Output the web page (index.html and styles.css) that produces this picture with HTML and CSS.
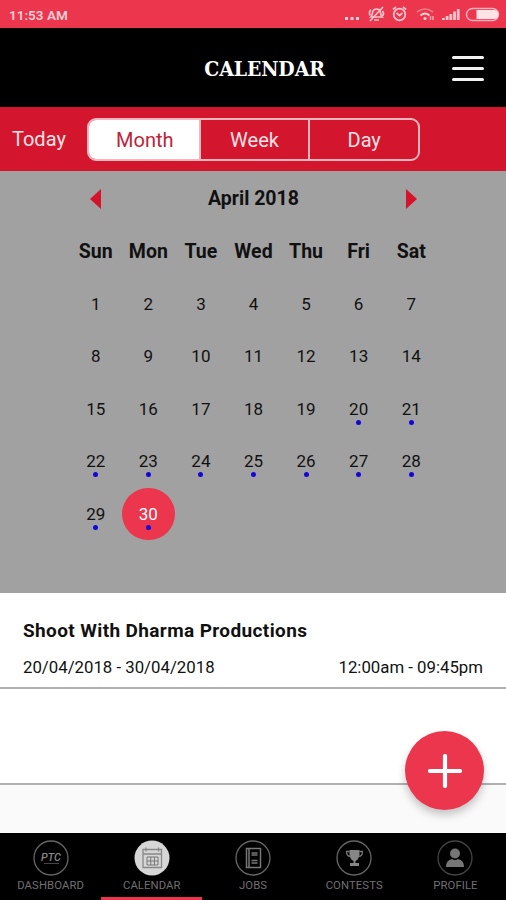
FILE: index.html
```html
<!DOCTYPE html>
<html lang="en">
<head>
    <meta charset="utf-8">
    <title>Calendar</title>
    <link rel="stylesheet" href="styles.css">
</head>
<body>
    <div class="status-bar">
        <span class="clock">11:53 AM</span>
        <svg class="status-icons" width="156" height="20" viewBox="0 0 156 20">
            <g fill="#fbd0d6">
                <rect x="1" y="13" width="3" height="3"/>
                <rect x="6.500" y="13" width="3" height="3"/>
                <rect x="12" y="13" width="3" height="3"/>
            </g>
            <!-- silent -->
            <g fill="none" stroke="#fbc3cb" stroke-width="1.700">
                <path d="M27 13c1.500-1.500 1-4 2-6 1-2.500 6-2.500 7 0 1 2 .5 4.500 2 6zM30 16h5M27 5.500q-2.500 2.500-1 6M38.500 7q2 2.500 0 5"/>
                <path d="M26 17L39 3"/>
            </g>
            <!-- alarm -->
            <g fill="none" stroke="#fbc3cb" stroke-width="1.800">
                <circle cx="55.500" cy="10.500" r="5.800"/>
                <path d="M52.500 9l3 2.500 3-2.500M49 5.500l3-2.500M59 3l3 2.500"/>
            </g>
            <!-- wifi -->
            <g fill="none" stroke-width="1.600">
                <path d="M73 8q8-6 16 0" stroke="#f27887"/>
                <path d="M76.500 11.500q4.500-4 9 0" stroke="#fbd0d6" stroke-width="2"/>
                <circle cx="81" cy="14.500" r="1.600" fill="#fbd0d6"/>
                <path d="M86.500 12v4M89 12v4" stroke="#f7a0ab"/>
            </g>
            <!-- signal -->
            <g fill="#fbc3cb">
                <rect x="98" y="14" width="2.800" height="2"/>
                <rect x="101.700" y="12" width="2.800" height="4"/>
                <rect x="105.400" y="10" width="2.800" height="6"/>
                <rect x="109.100" y="7.500" width="2.800" height="8.500"/>
                <rect x="112.800" y="5" width="2.800" height="11"/>
            </g>
            <!-- battery -->
            <rect x="122.500" y="4.500" width="32" height="12" rx="6" fill="none" stroke="#f8b0ba" stroke-width="1.500"/>
            <path d="M132.500 6h17.500a4.200 4.200 0 0 1 0 9H132.500z" fill="#fde3e6"/>
        </svg>
    </div>

    <div class="header">
        <h1>CALENDAR</h1>
        <div class="menu-btn"><span></span><span></span><span></span></div>
    </div>

    <div class="toolbar">
        <span class="today">Today</span>
        <div class="tabs">
            <span class="tab selected">Month</span>
            <span class="tab">Week</span>
            <span class="tab">Day</span>
        </div>
    </div>

    <div class="calendar">
        <div class="month">
            <svg width="11" height="20" viewBox="0 0 11 20"><path d="M11 0v20L0 10z" fill="#d5142c"/></svg>
            <h2>April 2018</h2>
            <svg width="11" height="20" viewBox="0 0 11 20"><path d="M0 0v20l11-10z" fill="#d5142c"/></svg>
        </div>
        <div class="days">
            <b>Sun</b><b>Mon</b><b>Tue</b><b>Wed</b><b>Thu</b><b>Fri</b><b>Sat</b>
            <span>1</span><span>2</span><span>3</span><span>4</span><span>5</span><span>6</span><span>7</span>
            <span>8</span><span>9</span><span>10</span><span>11</span><span>12</span><span>13</span><span>14</span>
            <span>15</span><span>16</span><span>17</span><span>18</span><span>19</span><span class="event-day">20</span><span class="event-day">21</span>
            <span class="event-day">22</span><span class="event-day">23</span><span class="event-day">24</span><span class="event-day">25</span><span class="event-day">26</span><span class="event-day">27</span><span class="event-day">28</span>
            <span class="event-day">29</span><span class="event-day active">30</span>
        </div>
    </div>

    <div class="events">
        <div class="event">
            <h3>Shoot With Dharma Productions</h3>
            <div class="event-time">
                <span>20/04/2018 - 30/04/2018</span>
                <span>12:00am - 09:45pm</span>
            </div>
        </div>
        <div class="event empty"></div>
        <div class="add-btn">
            <svg width="34" height="34" viewBox="0 0 34 34"><path d="M17 2v30M2 17h30" stroke="#fff" stroke-width="4.200" stroke-linecap="round"/></svg>
        </div>
    </div>

    <div class="bottom-nav">
        <div class="nav-item">
            <svg width="36" height="36" viewBox="0 0 36 36">
                <circle cx="18" cy="18" r="17" fill="none" stroke="#666" stroke-width="1.300"/>
                <text class="logo-text" x="18" y="21" text-anchor="middle" textLength="20" lengthAdjust="spacingAndGlyphs">PTC</text>
                <path d="M11 23.500h15" stroke="#444"/>
            </svg>
            <span>DASHBOARD</span>
        </div>
        <div class="nav-item current">
            <svg width="36" height="36" viewBox="0 0 36 36" fill="none" stroke="#888">
                <circle cx="18" cy="18" r="17.500" fill="#d6d6d6" stroke="none"/>
                <path d="M9 9.500h18.500v18H9zM9 14h18.500M12 7.500v4M24.500 7.500v4" stroke-width="1.300"/>
                <path d="M13 17h11v8H13zM16.700 17v8M20.400 17v8M13 21h11" stroke="#777"/>
            </svg>
            <span>CALENDAR</span>
        </div>
        <div class="nav-item">
            <svg width="36" height="36" viewBox="0 0 36 36" fill="none" stroke="#777">
                <circle cx="18" cy="18" r="17" stroke="#666" stroke-width="1.300"/>
                <path d="M11.500 8.500h14v19h-14zM14 8.500v19" stroke-width="1.500"/>
                <path d="M16.500 13h6M16.500 15h6M16.500 20.500h6M16.500 23h6" stroke-width="1.500"/>
            </svg>
            <span>JOBS</span>
        </div>
        <div class="nav-item">
            <svg width="36" height="36" viewBox="0 0 36 36">
                <circle cx="18" cy="18" r="17" fill="none" stroke="#666" stroke-width="1.300"/>
                <path d="M13.500 10h10v5q-1 5-4 6v2h3.500v3h-9v-3h3.500v-2q-3-1-4-6z" fill="#868686"/>
                <path d="M13.500 11.500h-3q0 5 4 5M23.500 11.500h3q0 5-4 5" fill="none" stroke="#777" stroke-width="1.300"/>
            </svg>
            <span>CONTESTS</span>
        </div>
        <div class="nav-item">
            <svg width="36" height="36" viewBox="0 0 36 36">
                <circle cx="18" cy="18" r="17" fill="none" stroke="#444" stroke-width="1.300"/>
                <circle cx="18" cy="13.500" r="5" fill="#777"/>
                <path d="M9 27q0-7 6-8 3 2 6 0 6 1 6 8z" fill="#777"/>
            </svg>
            <span>PROFILE</span>
        </div>
    </div>
</body>
</html>
```

FILE: styles.css
```css
* {
    box-sizing: border-box;
}
body {
    margin: 0;
    height: 900px;
    display: flex;
    flex-direction: column;
    font-family: Roboto, sans-serif;
    color: #111;
    overflow: hidden;
}
h1, h2, h3 {
    margin: 0;
}
svg {
    display: block;
}
.status-bar {
    height: 28px;
    padding: 0 6px 0 9px;
    display: flex;
    align-items: center;
    justify-content: space-between;
    background-color: #eb364d;
}
.clock {
    font-size: 13.5px;
    font-weight: 600;
    line-height: 28px;
    padding-top: 2px;
    color: #fbd0d6;
}
.header {
    height: 79px;
    padding: 0 22px 0 77px;
    display: flex;
    align-items: center;
    background-color: #000;
    color: #fff;
}
.header h1 {
    flex: 1;
    text-align: center;
    font-family: "DejaVu Serif Condensed", "DejaVu Serif", serif;
    font-stretch: condensed;
    font-size: 21px;
    letter-spacing: -0.1px;
    padding-top: 2px;
}
.menu-btn {
    width: 32px;
    display: flex;
    flex-direction: column;
    gap: 8px;
    padding-top: 1px;
}
.menu-btn span {
    height: 3px;
    border-radius: 2px;
    background-color: #f2f2f2;
}
.toolbar {
    height: 64px;
    padding-left: 12px;
    display: flex;
    align-items: center;
    background-color: #d3152d;
    color: #fbe3e6;
    font-size: 20px;
}
.today {
    width: 75px;
}
.tabs {
    width: 333px;
    height: 43px;
    display: flex;
    border: 2px solid #f5b5bd;
    border-radius: 9px;
    overflow: hidden;
}
.tab {
    flex: 1;
    line-height: 41px;
    text-align: center;
    border-left: 2px solid #f5b5bd;
}
.tab.selected {
    background-color: #fff;
    color: #c22238;
    border-left: none;
    padding-left: 2px;
}
.calendar {
    height: 422px;
    background-color: #a1a1a1;
}
.month {
    height: 54px;
    width: 327px;
    margin-left: 90px;
    padding-top: 1px;
    display: flex;
    align-items: center;
    justify-content: space-between;
}
.month h2 {
    font-size: 19.5px;
}
.days {
    width: 368px;
    margin-left: 69.5px;
    display: grid;
    grid-template-columns: repeat(7, 1fr);
    grid-auto-rows: 52.5px;
    line-height: 53px;
    text-align: center;
    font-size: 17px;
}
.days b {
    font-size: 19.5px;
}
.event-day::after {
    content: "";
    display: block;
    width: 5px;
    height: 5px;
    margin: -16px auto 0;
    border-radius: 50%;
    background-color: #1405d8;
}
.active {
    border-radius: 50%;
    background-color: #eb364d;
    color: #fff;
}
.events {
    position: relative;
    height: 240px;
    background-color: #fafafa;
}
.event {
    height: 96px;
    padding: 26px 23px 0;
    background-color: #fff;
    border-bottom: 2px solid #b0b0b0;
}
.event h3 {
    font-size: 19px;
    line-height: 24px;
    letter-spacing: 0.38px;
}
.event-time {
    display: flex;
    justify-content: space-between;
    margin-top: 13px;
    font-size: 16.8px;
    line-height: 22px;
}
.add-btn {
    position: absolute;
    right: 22px;
    bottom: 23px;
    width: 79px;
    height: 79px;
    display: flex;
    align-items: center;
    justify-content: center;
    border-radius: 50%;
    background-color: #eb364d;
    box-shadow: 0 5px 9px rgba(0,0,0,0.22);
}
.bottom-nav {
    height: 67px;
    display: flex;
    background-color: #000;
}
.nav-item {
    flex: 1;
    padding-top: 7px;
    display: flex;
    flex-direction: column;
    align-items: center;
    gap: 3px;
    border-bottom: 3px solid #000;
    font-size: 11.3px;
    line-height: 14px;
    letter-spacing: 0.1px;
    color: #707070;
}
.nav-item.current {
    border-bottom-color: #eb364d;
}
.logo-text {
    font-size: 11px;
    font-weight: 500;
    font-style: italic;
    fill: #888;
}
```
